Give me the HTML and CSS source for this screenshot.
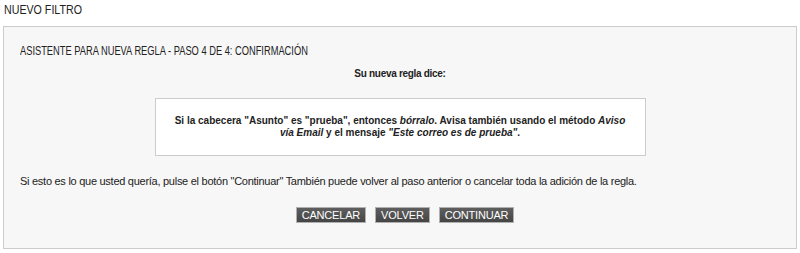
FILE: index.html
```html
<!DOCTYPE html>
<html lang="es">
<head>
    <meta charset="UTF-8">
    <title>Nuevo filtro</title>
    <link rel="stylesheet" href="styles.css">
</head>
<body>
    <h1 class="page-title"><span class="narrow">NUEVO FILTRO</span></h1>

    <div class="wizard-panel">
        <h2 class="wizard-title"><span class="narrow">ASISTENTE PARA NUEVA REGLA - PASO 4 DE 4: CONFIRMACIÓN</span></h2>

        <p class="rule-intro">Su nueva regla dice:</p>

        <div class="rule-box">
            Si la cabecera "Asunto" es "prueba", entonces <em>bórralo</em>. Avisa también usando el método <em>Aviso vía Email</em> y el mensaje <em>"Este correo es de prueba"</em>.
        </div>

        <p class="wizard-help">Si esto es lo que usted quería, pulse el botón "Continuar" También puede volver al paso anterior o cancelar toda la adición de la regla.</p>

        <div class="wizard-buttons">
            <button class="button">CANCELAR</button>
            <button class="button">VOLVER</button>
            <button class="button">CONTINUAR</button>
        </div>
    </div>
</body>
</html>
```

FILE: styles.css
```css
body {
    font-family: 'Liberation Sans', Arial, sans-serif;
    font-size: 11px;
    color: #222;
    background-color: #fff;
    margin: 0;
}

/* no narrow face installed, so squeeze the regular one */
.narrow {
    display: inline-block;
    transform: scaleX(0.82);
    transform-origin: left center;
    white-space: nowrap;
}

.page-title {
    font-weight: normal;
    font-size: 13px;
    line-height: 18px;
    color: #222;
    margin: 0;
    padding: 1px 4px 7px;
}

.wizard-panel {
    margin: 0 3px;
    background-color: #f7f7f7;
    border: 1px solid #ccc;
    padding: 17px 16px 25px;
}

.wizard-title {
    font-weight: normal;
    font-size: 12px;
    line-height: 14px;
    color: #222;
    margin: 0;
}

.wizard-title .narrow {
    transform: scaleX(0.775);
}

.rule-intro {
    font-weight: bold;
    font-size: 10px;
    letter-spacing: -0.3px;
    text-align: center;
    line-height: 14px;
    margin: 9px 0 0;
}

.rule-box {
    width: 451px;
    margin: 17px auto 0;
    padding: 16px 19px;
    background-color: #fff;
    border: 1px solid #ccc;
    font-weight: bold;
    font-size: 10px;
    line-height: 12px;
    text-align: center;
}

.wizard-help {
    letter-spacing: -0.27px;
    line-height: 14px;
    margin: 18px 0 0;
}

.wizard-buttons {
    display: flex;
    justify-content: center;
    gap: 9px;
    margin: 19px 0 0 10px;
}

.button {
    font-family: 'Liberation Sans', Arial, sans-serif;
    font-size: 11px;
    letter-spacing: -0.2px;
    line-height: 14px;
    height: 16px;
    padding: 0 5px;
    color: #fff;
    background: linear-gradient(#5e5e5e, #454545);
    border: 1px solid #b0b0b0;
    border-radius: 0;
    cursor: pointer;
}
```
